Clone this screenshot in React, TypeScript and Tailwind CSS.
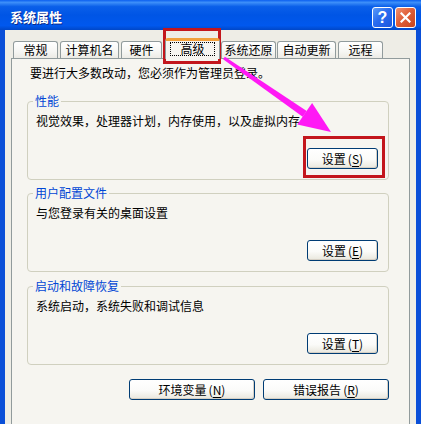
import React from "react";

const TABS = [
  { label: "常规", cls: "ml-[2px] w-[45px]" },
  { label: "计算机名", cls: "ml-[2px] w-[59px]" },
  { label: "硬件", cls: "ml-[2px] w-[41px]" },
  { label: "高级", cls: "ml-[3px] w-[55px]", active: true },
  { label: "系统还原", cls: "ml-[1px] w-[55px]" },
  { label: "自动更新", cls: "ml-[1px] w-[59px]" },
  { label: "远程", cls: "ml-[2px] w-[45px]" },
];

const GROUPS = [
  { title: "性能", desc: "视觉效果，处理器计划，内存使用，以及虚拟内存", hotkey: "S", gap: "mt-[12px]" },
  { title: "用户配置文件", desc: "与您登录有关的桌面设置", hotkey: "E", gap: "mt-[5px]" },
  { title: "启动和故障恢复", desc: "系统启动，系统失败和调试信息", hotkey: "T", gap: "mt-[6px]" },
];

function XpButton({ label, hotkey, width }: { label: string; hotkey: string; width: string }) {
  return (
    <button
      className={`${width} h-[21px] rounded-[3px] border border-[#003c74] bg-[linear-gradient(180deg,#ffffff_0%,#fbfbf9_55%,#e9e7dd_100%)] shadow-[inset_-1px_-1px_0_#d6d0c5] flex items-center justify-center text-[12px] leading-[16px] text-black`}
    >
      <span>{label}</span>
      <span className="ml-[2px]">
        (<span className="underline underline-offset-2">{hotkey}</span>)
      </span>
    </button>
  );
}

function TitleBar() {
  return (
    <div className="h-[30px] flex justify-between bg-[linear-gradient(180deg,#0b5ff0_0%,#3d8ff9_8%,#0a5fe9_22%,#0055e5_50%,#0058ee_85%,#0047c8_100%)]">
      <div className="pl-[10px] pt-[9px] text-[13px] leading-[16px] font-bold text-white [text-shadow:1px_1px_0_#0a2a8c]">
        系统属性
      </div>
      <div className="flex gap-[2px] pr-[5px] pt-[7px]">
        <div className="w-[21px] h-[21px] rounded-[3px] border border-white bg-[linear-gradient(135deg,#5b9cf8_0%,#2a6cef_45%,#1a55de_100%)] flex items-center justify-center text-white font-bold text-[16px] leading-none font-['Liberation_Sans',sans-serif]">
          ?
        </div>
        <div className="w-[21px] h-[21px] rounded-[3px] border border-white bg-[linear-gradient(135deg,#f09272_0%,#e0603a_45%,#c8441d_100%)] flex items-center justify-center">
          <svg width="11" height="11" viewBox="0 0 11 11">
            <path d="M1.5 1.5 L9.5 9.5 M9.5 1.5 L1.5 9.5" stroke="#fff" strokeWidth="2.2" strokeLinecap="square" />
          </svg>
        </div>
      </div>
    </div>
  );
}

export default function App() {
  return (
    <div className="relative w-[421px] h-[424px] overflow-hidden bg-[#0a4fd8] text-[12px] text-black font-['Noto_Sans_CJK_SC',sans-serif]">
      <TitleBar />

      <div className="mx-[5px] h-[394px] bg-[#eeede6] px-[6px] pt-[8px]">
        {/* tabs */}
        <div className="flex items-end h-[20px]">
          {TABS.map((t) =>
            t.active ? (
              <div
                key={t.label}
                className={`${t.cls} relative z-10 h-[21px] -mb-px rounded-t-[3px] border-x border-[#919b9c] border-t-[3px] border-t-[#f2a03c] bg-[#f6f5f0] flex justify-center pt-[1px]`}
              >
                <span className="h-[14px] w-[45px] border border-dotted border-black flex items-center justify-center leading-[12px]">
                  {t.label}
                </span>
              </div>
            ) : (
              <div
                key={t.label}
                className={`${t.cls} h-[17px] rounded-t-[3px] border-x border-t border-[#919b9c] bg-[linear-gradient(180deg,#ffffff_0%,#f6f6f3_60%,#ecebe5_100%)] flex items-center justify-center leading-[16px]`}
              >
                {t.label}
              </div>
            )
          )}
        </div>

        {/* tab page */}
        <div className="border border-[#919b9c] bg-[#f6f5f0] pt-[6px] pl-[15px] pb-[40px]">
          <p className="ml-[3px] leading-[16px]">要进行大多数改动，您必须作为管理员登录。</p>

          {GROUPS.map((g) => (
            <fieldset
              key={g.title}
              className={`${g.gap} w-[362px] rounded-[4px] border border-[#d0d0bf] p-0`}
            >
              <legend className="ml-[5px] px-[2px] leading-[16px] text-[#0046d5]">{g.title}</legend>
              <div className="pl-[8px] pr-[10px] pb-[10px]">
                <p className="mt-[4px] leading-[16px]">{g.desc}</p>
                <div className="mt-[19px] flex justify-end">
                  <XpButton label="设置" hotkey={g.hotkey} width="w-[71px]" />
                </div>
              </div>
            </fieldset>
          ))}

          <div className="mt-[14px] w-[362px] flex justify-end gap-[8px]">
            <XpButton label="环境变量" hotkey="N" width="w-[126px]" />
            <XpButton label="错误报告" hotkey="R" width="w-[126px]" />
          </div>
        </div>
      </div>

      {/* annotations drawn over the screenshot */}
      <div className="absolute left-[163px] top-[28px] w-[58px] h-[36px] border-[3px] border-[#c3161c] pointer-events-none" />
      <div className="absolute left-[303px] top-[136px] w-[82px] h-[42px] border-[3px] border-[#c3161c] pointer-events-none" />
      <svg className="absolute left-0 top-0 pointer-events-none" width="421" height="424" viewBox="0 0 421 424">
        <polygon points="224.9,56.8 306.7,110.9 302.7,116.7 223.1,59.2" fill="#ff19f5" />
        <polygon points="331,132 297.3,124.5 312.1,103.1" fill="#ff19f5" />
      </svg>
    </div>
  );
}
